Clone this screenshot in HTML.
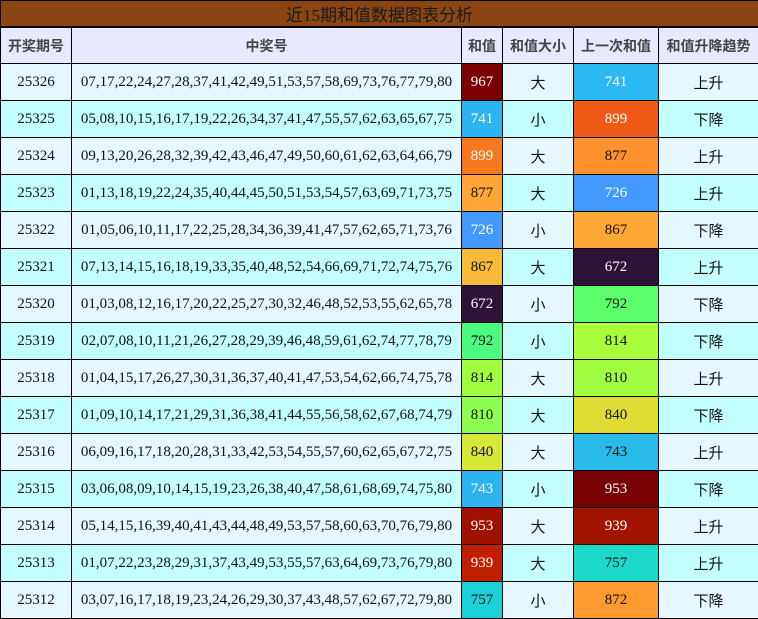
<!DOCTYPE html>
<html><head><meta charset="utf-8"><style>
body{margin:0;background:#fff;width:758px;height:618px;overflow:hidden}
table{border-collapse:collapse;table-layout:fixed;width:758px;font-family:"Liberation Serif","Noto Serif CJK SC","Noto Sans CJK SC",serif;font-size:15px;color:#111}
td{border:1px solid #000;padding:0;text-align:center;height:36px;white-space:nowrap;overflow:hidden}
.t td{background:#8B4513;height:24px;border-bottom:2px solid #000;font-size:17px;color:#1a1a1a;font-family:"Liberation Serif","Noto Sans CJK SC",sans-serif}
.h td{background:#E8E8FF;font-family:"Liberation Sans","Noto Sans CJK SC",sans-serif;font-weight:bold;color:#444;font-size:14px;height:35px}
tr.a td{background:#E6F8FF}
tr.b td{background:#C4FFFF}
td.w{color:#fff}
.zh{font-family:"Liberation Sans","Noto Sans CJK SC",sans-serif;font-size:15px}
</style></head><body>
<table>
<colgroup><col style="width:71px"><col style="width:390px"><col style="width:41px"><col style="width:71px"><col style="width:85px"><col style="width:100px"></colgroup>
<tr class="t"><td colspan="6">近15期和值数据图表分析</td></tr>
<tr class="h"><td>开奖期号</td><td>中奖号</td><td>和值</td><td>和值大小</td><td>上一次和值</td><td>和值升降趋势</td></tr>
<tr class="a"><td>25326</td><td>07,17,22,24,27,28,37,41,42,49,51,53,57,58,69,73,76,77,79,80</td><td class="w" style="background:#7A0000">967</td><td class="zh">大</td><td class="w" style="background:#2CB8F0">741</td><td class="zh">上升</td></tr>
<tr class="b"><td>25325</td><td>05,08,10,15,16,17,19,22,26,34,37,41,47,55,57,62,63,65,67,75</td><td class="w" style="background:#2CB4F2">741</td><td class="zh">小</td><td class="w" style="background:#EE5A14">899</td><td class="zh">下降</td></tr>
<tr class="a"><td>25324</td><td>09,13,20,26,28,32,39,42,43,46,47,49,50,60,61,62,63,64,66,79</td><td class="w" style="background:#F87820">899</td><td class="zh">大</td><td style="background:#FF922E">877</td><td class="zh">上升</td></tr>
<tr class="b"><td>25323</td><td>01,13,18,19,22,24,35,40,44,45,50,51,53,54,57,63,69,71,73,75</td><td style="background:#FFA636">877</td><td class="zh">大</td><td class="w" style="background:#4499FF">726</td><td class="zh">上升</td></tr>
<tr class="a"><td>25322</td><td>01,05,06,10,11,17,22,25,28,34,36,39,41,47,57,62,65,71,73,76</td><td class="w" style="background:#4499FF">726</td><td class="zh">小</td><td style="background:#FFA836">867</td><td class="zh">下降</td></tr>
<tr class="b"><td>25321</td><td>07,13,14,15,16,18,19,33,35,40,48,52,54,66,69,71,72,74,75,76</td><td style="background:#F8BA38">867</td><td class="zh">大</td><td class="w" style="background:#2E1238">672</td><td class="zh">上升</td></tr>
<tr class="a"><td>25320</td><td>01,03,08,12,16,17,20,22,25,27,30,32,46,48,52,53,55,62,65,78</td><td class="w" style="background:#2E1238">672</td><td class="zh">小</td><td style="background:#5CFF6A">792</td><td class="zh">下降</td></tr>
<tr class="b"><td>25319</td><td>02,07,08,10,11,21,26,27,28,29,39,46,48,59,61,62,74,77,78,79</td><td style="background:#4CFA80">792</td><td class="zh">小</td><td style="background:#A8FF3A">814</td><td class="zh">下降</td></tr>
<tr class="a"><td>25318</td><td>01,04,15,17,26,27,30,31,36,37,40,41,47,53,54,62,66,74,75,78</td><td style="background:#A0FF40">814</td><td class="zh">大</td><td style="background:#A0FF40">810</td><td class="zh">上升</td></tr>
<tr class="b"><td>25317</td><td>01,09,10,14,17,21,29,31,36,38,41,44,55,56,58,62,67,68,74,79</td><td style="background:#8CFF50">810</td><td class="zh">大</td><td style="background:#E0DC34">840</td><td class="zh">下降</td></tr>
<tr class="a"><td>25316</td><td>06,09,16,17,18,20,28,31,33,42,53,54,55,57,60,62,65,67,72,75</td><td style="background:#D8E838">840</td><td class="zh">大</td><td style="background:#2ABCE8">743</td><td class="zh">上升</td></tr>
<tr class="b"><td>25315</td><td>03,06,08,09,10,14,15,19,23,26,38,40,47,58,61,68,69,74,75,80</td><td class="w" style="background:#2CB4F2">743</td><td class="zh">小</td><td class="w" style="background:#780000">953</td><td class="zh">下降</td></tr>
<tr class="a"><td>25314</td><td>05,14,15,16,39,40,41,43,44,48,49,53,57,58,60,63,70,76,79,80</td><td class="w" style="background:#A01000">953</td><td class="zh">大</td><td class="w" style="background:#A01400">939</td><td class="zh">上升</td></tr>
<tr class="b"><td>25313</td><td>01,07,22,23,28,29,31,37,43,49,53,55,57,63,64,69,73,76,79,80</td><td class="w" style="background:#C02000">939</td><td class="zh">大</td><td style="background:#1CD8C8">757</td><td class="zh">上升</td></tr>
<tr class="a"><td>25312</td><td>03,07,16,17,18,19,23,24,26,29,30,37,43,48,57,62,67,72,79,80</td><td style="background:#1CD0D8">757</td><td class="zh">小</td><td style="background:#FF9A30">872</td><td class="zh">下降</td></tr>
</table>
</body></html>
